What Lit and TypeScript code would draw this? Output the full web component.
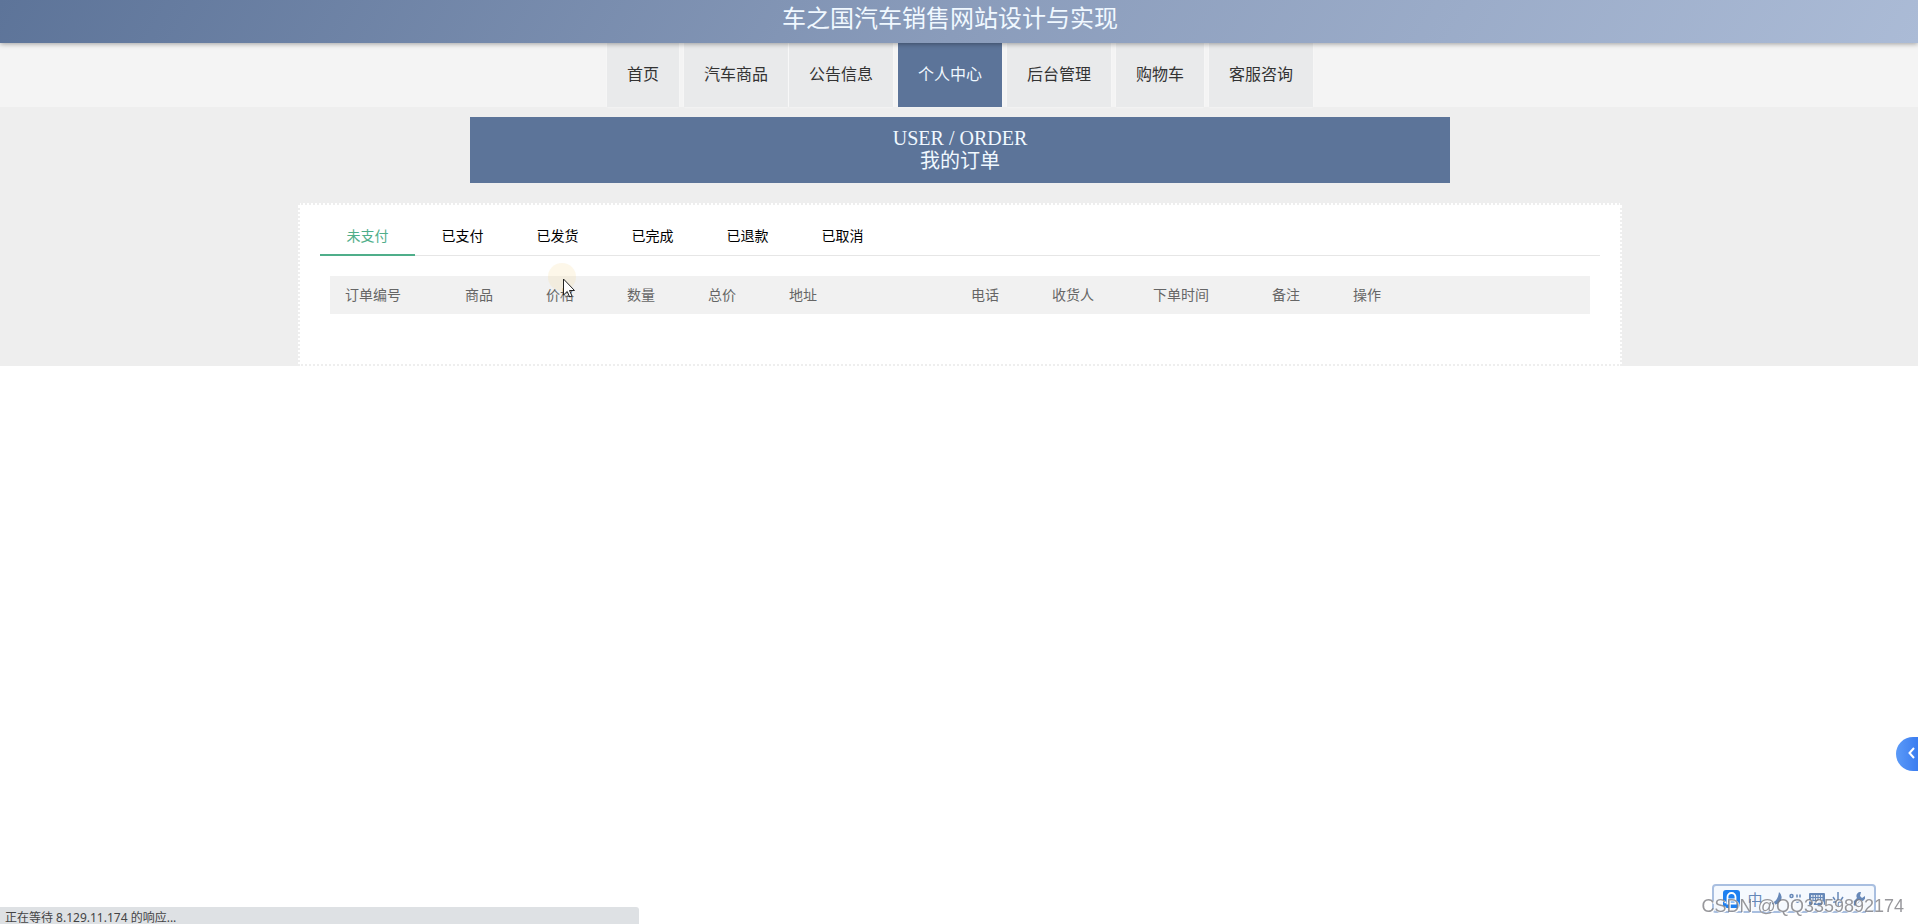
import { LitElement, html, css } from "lit";
import { customElement, state } from "lit/decorators.js";
import { classMap } from "lit/directives/class-map.js";

const NAV = ["首页", "汽车商品", "公告信息", "个人中心", "后台管理", "购物车", "客服咨询"];
const TABS = ["未支付", "已支付", "已发货", "已完成", "已退款", "已取消"];
const COLUMNS: [string, string][] = [
  ["订单编号", "w120"], ["商品", "w81"], ["价格", "w81"], ["数量", "w81"], ["总价", "w81"],
  ["地址", "w182"], ["电话", "w81"], ["收货人", "w101"], ["下单时间", "w119"], ["备注", "w81"], ["操作", "rest"],
];

@customElement("site-header")
class SiteHeader extends LitElement {
  static styles = css`
    :host { display: block; position: relative; z-index: 1; }
    .bar {
      height: 43px; padding-right: 18px; box-sizing: border-box;
      background: linear-gradient(120deg, #5d7499 0%, #8a9cbb 50%, #abbbd6 100%);
      box-shadow: 0 1px 5px rgba(0, 0, 0, 0.35);
    }
    h1 { margin: 0; text-align: center; font-size: 24px; line-height: 34px; font-weight: 400; color: #f0f8ff; }
  `;
  render() {
    return html`<header class="bar"><h1>车之国汽车销售网站设计与实现</h1></header>`;
  }
}

@customElement("site-nav")
class SiteNav extends LitElement {
  @state() private active = 3;
  static styles = css`
    :host { display: block; }
    .nav { display: flex; justify-content: center; padding-left: 2px; background: #f4f4f4; }
    .item {
      margin-left: 5px; padding: 0 20px 4px; font-size: 16px; line-height: 60px;
      color: #333; text-decoration: none; background: #e9eaeb; box-shadow: 0 0 2px #fafafa;
    }
    .item:first-child { margin-left: 0; }
    .item.joined { margin-left: 1px; }
    .item.active { background: #5c7499; color: #f0f8ff; }
  `;
  render() {
    return html`<nav class="nav">
      ${NAV.map((t, i) => html`<a href="#" class=${classMap({ item: true, joined: i === 2, active: i === this.active })}
        @click=${(e: Event) => { e.preventDefault(); this.active = i; }}>${t}</a>`)}
    </nav>`;
  }
}

@customElement("order-panel")
class OrderPanel extends LitElement {
  @state() private active = 0;
  static styles = css`
    :host { display: block; }
    .panel {
      max-width: 1280px; margin: 0 auto; padding: 10px 20px 50px; background: #fff;
      border: 2px dotted #eee;
    }
    .tabs { display: flex; border-bottom: 1px solid #e6e6e6; }
    .tab {
      box-sizing: content-box; min-width: 65px; height: 39px; margin-bottom: -1px; padding: 0 15px;
      border: 0; border-bottom: 2px solid transparent; background: none;
      font: inherit; font-size: 14px; line-height: 38px; color: #000;
    }
    .tab.active { color: #4fae8a; border-bottom-color: #4fae8a; }
    .wrap { padding: 20px 10px 0; }
    table { width: 100%; table-layout: fixed; border-collapse: collapse; background: #f1f1f1; color: #666; }
    th { padding: 8px 0 10px 15px; text-align: left; font-size: 14px; line-height: 20px; font-weight: 400; }
    .w120 { width: 105px; }
    .w81 { width: 66px; }
    .w101 { width: 86px; }
    .w119 { width: 104px; }
    .w182 { width: 167px; }
  `;
  render() {
    return html`<section class="panel">
      <div class="tabs" role="tablist">
        ${TABS.map((t, i) => html`<button role="tab" aria-selected=${i === this.active}
          class=${classMap({ tab: true, active: i === this.active })} @click=${() => (this.active = i)}>${t}</button>`)}
      </div>
      <div class="wrap">
        <table>
          <thead><tr>${COLUMNS.map(([t, w]) => html`<th scope="col" class=${w}>${t}</th>`)}</tr></thead>
        </table>
      </div>
    </section>`;
  }
}

@customElement("input-toolbar")
class InputToolbar extends LitElement {
  static styles = css`
    :host { display: block; }
    .box {
      display: flex; align-items: center; justify-content: space-between; width: 164px; height: 29px; padding: 0 9px;
      box-sizing: border-box; border: 2px solid #a9bfe0; border-radius: 4px; background: #f5f9fe; color: #6688b8;
    }
    .glyph { font-size: 15px; line-height: 20px; }
    svg { display: block; }
  `;
  render() {
    return html`<div class="box">
      <svg width="17" height="18" viewBox="0 0 17 18">
        <rect width="17" height="18" rx="3" fill="#1e80f0" />
        <path d="M4.5 13V7a4 4 0 0 1 8 0v6M4.5 9.5h8M3.500 13.500h10" fill="none" stroke="#fff" stroke-width="1.8" />
      </svg>
      <span class="glyph">中</span>
      <svg width="12" height="14" viewBox="0 0 12 14"><path d="M9 0a7 7 0 1 1-9 11c5 0 8-4 9-11z" fill="currentColor" /></svg>
      <svg width="12" height="12" viewBox="0 0 12 12" fill="none" stroke="currentColor" stroke-width="1.5">
        <circle cx="2.5" cy="3" r="1.5" /><path d="M8 1.5v3M11 1.500v3M6 7c1 3 4 3 5 0" />
      </svg>
      <svg width="16" height="12" viewBox="0 0 16 12">
        <rect width="16" height="12" rx="1" fill="currentColor" />
        <path d="M2 3h12M2 6h12" stroke="#fff" stroke-width="1.5" stroke-dasharray="1.5 1" /><path d="M4 9h8" stroke="#fff" stroke-width="1.5" />
      </svg>
      <svg width="12" height="14" viewBox="0 0 12 14" fill="none" stroke="currentColor" stroke-width="1.5">
        <path d="M6 0v14M1 5l2 3M11 5L9 8M1 10h10" />
      </svg>
      <svg width="13" height="14" viewBox="0 0 13 14"><path d="M9 0a4 4 0 0 0-4 6L0 11l3 3 5-5a4 4 0 0 0 5-5l-3 2-2-2z" fill="currentColor" /></svg>
    </div>`;
  }
}

@customElement("app-root")
class AppRoot extends LitElement {
  static styles = css`
    :host {
      display: block; min-height: 100vh; background: #fff;
      font-family: "Noto Sans CJK SC", sans-serif;
    }
    .body { padding: 10px 0 0 2px; background: #eee; }
    .banner {
      max-width: 980px; margin: 0 auto 20px; padding: 10px 0; background: #5c7499; color: #f0f8ff;
      font-family: "Liberation Serif", "Noto Sans CJK SC", serif; font-size: 20px; line-height: 23px; text-align: center;
    }
    .banner p { margin: 0; }
    .pointer { position: absolute; left: 547px; top: 262px; }
    .drawer {
      position: fixed; right: 0; top: 737px; width: 22px; height: 34px; padding: 0 0 0 9px; border: 0;
      border-radius: 17px 0 0 17px; background: linear-gradient(90deg, #5b9af8, #3b7df0);
    }
    .ime { position: fixed; right: 42px; bottom: 11px; }
    .mark {
      position: fixed; right: 14px; bottom: 8px; font: 18px/20px "Liberation Sans", sans-serif;
      color: rgba(125, 125, 130, 0.8); text-shadow: 1px 1px 0 #fff;
    }
    .status {
      position: fixed; left: 0; bottom: 0; width: 639px; height: 17px; overflow: hidden; padding-left: 5px; box-sizing: border-box;
      background: #dee1e4; border-top-right-radius: 3px; color: #444; font: 12px/22px "Noto Sans", "Noto Sans CJK SC", sans-serif;
    }
  `;
  render() {
    return html`
      <site-header></site-header>
      <site-nav></site-nav>
      <main class="body">
        <div class="banner"><p>USER / ORDER</p><p>我的订单</p></div>
        <order-panel></order-panel>
      </main>
      <svg class="pointer" width="30" height="36" viewBox="0 0 30 36">
        <circle cx="15" cy="15" r="14" fill="#f9dfa8" opacity="0.25" />
        <path d="M16.5 17v16l3.7-3.5 2.5 5.5 2.3-1-2.5-5.500h5z" fill="#fff" stroke="#222" stroke-width="1" />
      </svg>
      <button class="drawer" aria-label="展开">
        <svg width="7" height="12" viewBox="0 0 7 12"><path d="M6 1L1.5 6 6 11" fill="none" stroke="#fff" stroke-width="2" /></svg>
      </button>
      <input-toolbar class="ime"></input-toolbar>
      <div class="mark">CSDN @QQ3359892174</div>
      <div class="status">正在等待 8.129.11.174 的响应...</div>
    `;
  }
}
